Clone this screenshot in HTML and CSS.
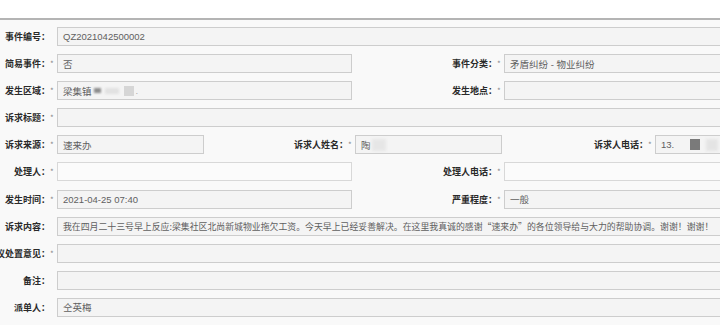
FILE: index.html
```html
<!DOCTYPE html>
<html lang="zh-CN">
<head>
<meta charset="utf-8">
<title>事件详情</title>
<link rel="stylesheet" href="styles.css">
</head>
<body>
<div class="topbar"></div>
<div class="form">
  <div class="row">
    <div class="lbl"><span class="t">事件编号：</span><span class="req"></span></div>
    <div class="inp grow">QZ2021042500002</div>
  </div>
  <div class="row">
    <div class="lbl"><span class="t">简易事件：</span><span class="req">*</span></div>
    <div class="inp w-half">否</div>
    <div class="lbl w-rlbl"><span class="t">事件分类：</span><span class="req">*</span></div>
    <div class="inp grow">矛盾纠纷 - 物业纠纷</div>
  </div>
  <div class="row">
    <div class="lbl"><span class="t">发生区域：</span><span class="req">*</span></div>
    <div class="inp w-half">梁集镇<span class="blur b-dark"></span><span class="blur b-soft"></span><span class="blur b-light"></span><span class="dot">.</span></div>
    <div class="lbl w-rlbl"><span class="t">发生地点：</span><span class="req">*</span></div>
    <div class="inp grow"></div>
  </div>
  <div class="row">
    <div class="lbl"><span class="t">诉求标题：</span><span class="req">*</span></div>
    <div class="inp grow"></div>
  </div>
  <div class="row">
    <div class="lbl"><span class="t">诉求来源：</span><span class="req">*</span></div>
    <div class="inp w-third">速来办</div>
    <div class="lbl w-mlbl"><span class="t">诉求人姓名：</span><span class="req">*</span></div>
    <div class="inp w-third">陶<span class="blur b-name"></span></div>
    <div class="lbl w-r3lbl"><span class="t">诉求人电话：</span><span class="req">*</span></div>
    <div class="inp grow">13.<span class="blur b-phone-gap"></span><span class="blur b-phone"></span><span class="blur b-phone-soft"></span></div>
  </div>
  <div class="row">
    <div class="lbl"><span class="t">处理人：</span><span class="req">*</span></div>
    <div class="inp w-half white"></div>
    <div class="lbl w-rlbl"><span class="t">处理人电话：</span><span class="req">*</span></div>
    <div class="inp grow white"></div>
  </div>
  <div class="row">
    <div class="lbl"><span class="t">发生时间：</span><span class="req">*</span></div>
    <div class="inp w-half">2021-04-25 07:40</div>
    <div class="lbl w-rlbl"><span class="t">严重程度：</span><span class="req">*</span></div>
    <div class="inp grow">一般</div>
  </div>
  <div class="row">
    <div class="lbl"><span class="t">诉求内容：</span><span class="req"></span></div>
    <div class="inp grow cjk">我在四月二十三号早上反应:梁集社区北尚新城物业拖欠工资。今天早上已经妥善解决。在这里我真诚的感谢“速来办”的各位领导给与大力的帮助协调。谢谢！谢谢！</div>
  </div>
  <div class="row">
    <div class="lbl"><span class="t">建议处置意见：</span><span class="req">*</span></div>
    <div class="inp grow"></div>
  </div>
  <div class="row">
    <div class="lbl"><span class="t">备注：</span><span class="req"></span></div>
    <div class="inp grow"></div>
  </div>
  <div class="row">
    <div class="lbl"><span class="t">派单人：</span><span class="req"></span></div>
    <div class="inp grow">仝英梅</div>
  </div>
</div>
</body>
</html>
```

FILE: styles.css
```css
html, body {
  margin: 0;
  padding: 0;
}
body {
  width: 720px;
  height: 325px;
  overflow: hidden;
  background: #f9f9f9;
  font-family: "Liberation Sans", "Noto Sans CJK SC", sans-serif;
}
.topbar {
  height: 18px;
  background: #ffffff;
  border-bottom: 2px solid #b4b4b4;
}
.form {
  width: 820px;
  padding-top: 7px;
  display: flex;
  flex-direction: column;
  gap: 8.1px;
}
.row {
  display: flex;
  align-items: center;
  height: 19px;
}
.lbl {
  flex: 0 0 57px;
  width: 57px;
  display: flex;
  justify-content: flex-end;
  align-items: center;
  padding-right: 2px;
  box-sizing: border-box;
  white-space: nowrap;
  font-family: "Noto Sans CJK SC", sans-serif;
  font-size: 9px;
  font-weight: 600;
  color: #2a2a2a;
}
.lbl .t {
  flex: none;
}
.lbl .req {
  flex: 0 0 5px;
  width: 5px;
  color: #8a8a8a;
  font-weight: 400;
  font-size: 8px;
  text-align: left;
}
.w-rlbl {
  flex-basis: 152px;
  width: 152px;
}
.w-mlbl {
  flex-basis: 151px;
  width: 151px;
}
.w-r3lbl {
  flex-basis: 153px;
  width: 153px;
}
.inp {
  height: 19px;
  box-sizing: border-box;
  border: 1px solid #cdcdcd;
  background: #f4f4f4;
  padding-left: 5px;
  display: flex;
  align-items: center;
  white-space: nowrap;
  overflow: hidden;
  font-size: 9.5px;
  color: #606060;
  font-family: "Liberation Sans", "Noto Sans CJK SC", sans-serif;
}
.inp.cjk {
  font-family: "Noto Sans CJK SC", sans-serif;
  font-size: 8.9px;
}
.inp.white {
  background: #fbfbfb;
  border-color: #d8d8d8;
}
.w-half {
  flex: 0 0 295px;
}
.w-third {
  flex: 0 0 147px;
}
.grow {
  flex: 1 1 auto;
  min-width: 0;
}
.blur {
  display: inline-block;
  flex: none;
}
.b-dark {
  width: 7px;
  height: 5px;
  margin-left: 2px;
  background: #8c8c8c;
  filter: blur(0.8px);
}
.b-soft {
  width: 14px;
  height: 6px;
  margin-left: 4px;
  background: #e2e2e2;
  filter: blur(1px);
}
.b-light {
  width: 10px;
  height: 10px;
  margin-left: 5px;
  background: #d6d6d6;
  filter: blur(0.6px);
}
.dot {
  margin-left: 2px;
  color: #aaa;
}
.b-name {
  width: 14px;
  height: 12px;
  margin-left: 1px;
  background: #e6e6e6;
  filter: blur(1.5px);
}
.b-phone-gap {
  width: 16px;
  height: 12px;
}
.b-phone {
  width: 10px;
  height: 11px;
  background: #7a7a7a;
  filter: blur(0.5px);
}
.b-phone-soft {
  width: 12px;
  height: 12px;
  margin-left: 6px;
  background: #e4e4e4;
  filter: blur(1.5px);
}
```
